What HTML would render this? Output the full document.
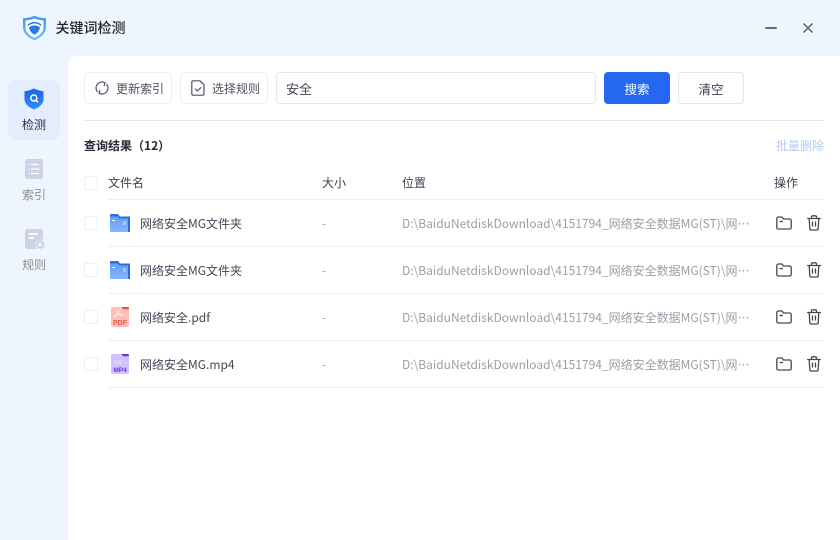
<!DOCTYPE html>
<html lang="zh">
<head>
<meta charset="utf-8">
<style>
*{box-sizing:border-box;margin:0;padding:0}
html,body{width:840px;height:540px;overflow:hidden}
body{background:#eef5ff;font-family:"Noto Sans CJK SC","Liberation Sans",sans-serif;font-size:12px;color:#333a47;position:relative}
.a{position:absolute;white-space:nowrap}
.t{line-height:18px;height:18px}
#main{position:absolute;left:68px;top:56px;width:772px;height:484px;background:#fff;border-top-left-radius:8px}
.btn{position:absolute;top:72px;height:32px;border:1px solid #eceef5;border-radius:4px;background:#fff;line-height:32px;color:#4a5160}
.cb{position:absolute;left:84px;width:14px;height:14px;border:1px solid #eeeff2;border-radius:2px;background:#fff}
.line{position:absolute;height:1px;background:#eceef4}
.nm{left:140px;color:#414855;font-size:12px}
.dash{left:322px;color:#a0a4ad}
.pth{left:402px;width:348px;color:#9a9ea8;overflow:hidden}
svg{position:absolute;display:block;overflow:visible}
</style>
</head>
<body>
<svg style="left:22px;top:15px" width="25" height="26" viewBox="0 0 25 26">
<defs><linearGradient id="o" x1="0" y1="0" x2="0" y2="1"><stop offset="0" stop-color="#3f97f3"/><stop offset="1" stop-color="#6cc0f8"/></linearGradient></defs>
<path d="M12.500 .8C9 2.400 5.500 3.100 1 3.300V12C1 18 6 22.800 12.500 25.300C19 22.800 24 18 24 12V3.300C19.500 3.100 16 2.400 12.500 .8Z" fill="url(#o)"/>
<path d="M12.500 3.400C9.500 4.700 6.800 5.300 3.500 5.600V12C3.500 17 7.200 20.600 12.500 22.700C17.800 20.600 21.500 17 21.500 12V5.600C18.200 5.300 15.500 4.700 12.500 3.400Z" fill="#fff"/>
<path d="M5.800 10.500C9.500 6.900 15.500 6.900 19.200 10.500" fill="none" stroke="#2b78ee" stroke-width="1.500"/>
<path d="M7 12.500C10.500 9.700 14.500 9.700 18 12.500C17.200 16.200 15.200 18.400 12.500 19.600C9.800 18.400 7.800 16.200 7 12.500Z" fill="#2478f0"/>
</svg>
<div class="a" style="left:55.500px;top:18px;font-size:14px;line-height:20px;font-weight:500;color:#1f2430">关键词检测</div>
<div class="a" style="left:765px;top:27px;width:12px;height:2px;background:#666b78;border-radius:1px"></div>
<svg style="left:803px;top:23px" width="10" height="10" viewBox="0 0 10 10"><path d="M.5 .5L9.500 9.500M9.500 .5L.5 9.500" stroke="#5a5e6e" stroke-width="1.500"/></svg>

<div class="a" style="left:8px;top:80px;width:52px;height:60px;background:#e3edfd;border-radius:8px"></div>
<svg style="left:24px;top:88px" width="20" height="22" viewBox="0 0 20 22">
<defs><linearGradient id="g" x1="0" y1="0" x2="0" y2="1"><stop offset="0" stop-color="#1a62ea"/><stop offset="1" stop-color="#2f8df5"/></linearGradient></defs>
<path d="M10 .5C7.500 1.800 4.500 2.700 .5 3.200V11C.5 15.500 4 19 10 21.500C16 19 19.500 15.500 19.500 11V3.200C15.500 2.700 12.500 1.800 10 .5Z" fill="url(#g)"/>
<circle cx="9.800" cy="10" r="3" fill="none" stroke="#fff" stroke-width="1.500"/>
<path d="M12 12.200L13.600 13.800" stroke="#fff" stroke-width="1.500" stroke-linecap="round"/>
</svg>
<div class="a t" style="left:22px;top:116px;color:#2b3240">检测</div>

<svg style="left:25px;top:159px" width="18" height="20" viewBox="0 0 18 20">
<rect width="18" height="20" rx="2.500" fill="#cdd3e4"/>
<path d="M6 5.500H14M6 10H14M6 14.500H14" stroke="#fff" stroke-width="1.300"/>
<path d="M3.500 5.500H4.700M3.500 10H4.700M3.500 14.500H4.700" stroke="#fff" stroke-width="1.300"/>
</svg>
<div class="a t" style="left:22px;top:186px;color:#8b8f9b">索引</div>

<svg style="left:25px;top:229px" width="20" height="22" viewBox="0 0 20 22">
<path d="M2.500 0H15.500A2.500 2.500 0 0 1 18 2.500V11A5.500 5.500 0 0 0 11 19V20H2.500A2.500 2.500 0 0 1 0 17.500V2.500A2.500 2.500 0 0 1 2.500 0Z" fill="#cdd3e4"/>
<path d="M3.500 5H13M3.500 9H9" stroke="#fff" stroke-width="1.700"/>
<circle cx="15" cy="15.500" r="2.800" fill="none" stroke="#cdd3e4" stroke-width="1.800"/>
<circle cx="15" cy="15.500" r="4.300" fill="none" stroke="#cdd3e4" stroke-width="1.100" stroke-dasharray="1.600 1.100"/>
</svg>
<div class="a t" style="left:22px;top:256px;color:#8b8f9b">规则</div>

<div id="main"></div>

<div class="btn" style="left:84px;width:88px"><span class="a" style="left:31px;top:0">更新索引</span></div>
<svg style="left:95px;top:81px" width="14" height="14" viewBox="0 0 14 14" fill="none" stroke="#4c5261" stroke-width="1.200" stroke-linecap="round" stroke-linejoin="round">
<path d="M2.200 10.600A6 6 0 0 1 10 1.800L9.200 4.600"/><path d="M11.800 3.400A6 6 0 0 1 4 12.200L4.800 9.400"/>
</svg>
<div class="btn" style="left:180px;width:88px"><span class="a" style="left:31px;top:0">选择规则</span></div>
<svg style="left:191px;top:80px" width="14" height="16" viewBox="0 0 14 16" fill="none" stroke="#4c5261" stroke-width="1.200" stroke-linejoin="round" stroke-linecap="round">
<path d="M2 .8H9L13 4.800V13.800A1.400 1.400 0 0 1 11.600 15.200H2.200A1.400 1.400 0 0 1 .8 13.800V2A1.200 1.200 0 0 1 2 .8Z"/>
<path d="M4.300 9L6.300 11L9.700 7.800"/>
</svg>
<div class="btn" style="left:276px;width:320px;border-color:#e4e6ec;color:#414855"><span class="a" style="left:9px;top:0;font-size:13px">安全</span></div>
<div class="btn" style="left:604px;width:66px;background:#2468f2;border-color:#2468f2;color:#fff;text-align:center;font-size:12.500px;line-height:31px">搜索</div>
<div class="btn" style="left:678px;width:66px;border-color:#e6e7eb;color:#3a404c;text-align:center;font-size:12.500px;line-height:31px">清空</div>

<div class="line" style="left:84px;top:120px;width:740px;background:#e8e9ee"></div>
<div class="a t" style="left:84px;top:137px;font-weight:700;color:#252b38">查询结果（12）</div>
<div class="a t" style="left:776px;top:137px;color:#b4cbf8">批量删除</div>

<div class="cb" style="top:176px"></div>
<div class="a t" style="left:108px;top:174px;color:#3d4350">文件名</div>
<div class="a t" style="left:322px;top:174px;color:#3d4350">大小</div>
<div class="a t" style="left:402px;top:174px;color:#3d4350">位置</div>
<div class="a t" style="left:774px;top:174px;color:#3d4350">操作</div>
<div class="line" style="left:108px;top:199px;width:716px"></div>

<!-- row 1 -->
<div class="cb" style="top:216px"></div>
<svg style="left:110px;top:214px" width="20" height="18" viewBox="0 0 20 18">
<defs><linearGradient id="f" x1="0" y1="0" x2="0" y2="1"><stop offset="0" stop-color="#64a0f8"/><stop offset="1" stop-color="#84b6fb"/></linearGradient></defs>
<path d="M0 1.500A1.200 1.200 0 0 1 1.200 0H8L10 2.500H20V18H1.200A1.200 1.200 0 0 1 0 16.800Z" fill="#2f6be0"/>
<path d="M0 3.500A1 1 0 0 1 1 2.500H8L9.500 4.500H18V18H1.200A1.200 1.200 0 0 1 0 16.800Z" fill="url(#f)"/>
<path d="M2 6.500H5" stroke="#fff" stroke-width="1"/><rect x="13" y="7" width="3" height="4" fill="#a3c6fb"/>
</svg>
<div class="a t nm" style="top:215px">网络安全MG文件夹</div>
<div class="a t dash" style="top:215px">-</div>
<div class="a t pth" style="top:215px">D:\BaiduNetdiskDownload\4151794_网络安全数据MG(ST)\网…</div>
<div class="line" style="left:108px;top:246px;width:716px"></div>

<!-- row 2 -->
<div class="cb" style="top:263px"></div>
<svg style="left:110px;top:261px" width="20" height="18" viewBox="0 0 20 18">
<path d="M0 1.500A1.200 1.200 0 0 1 1.200 0H8L10 2.500H20V18H1.200A1.200 1.200 0 0 1 0 16.800Z" fill="#2f6be0"/>
<path d="M0 3.500A1 1 0 0 1 1 2.500H8L9.500 4.500H18V18H1.200A1.200 1.200 0 0 1 0 16.800Z" fill="url(#f)"/>
<path d="M2 6.500H5" stroke="#fff" stroke-width="1"/><rect x="13" y="7" width="3" height="4" fill="#a3c6fb"/>
</svg>
<div class="a t nm" style="top:262px">网络安全MG文件夹</div>
<div class="a t dash" style="top:262px">-</div>
<div class="a t pth" style="top:262px">D:\BaiduNetdiskDownload\4151794_网络安全数据MG(ST)\网…</div>
<div class="line" style="left:108px;top:293px;width:716px"></div>

<!-- row 3 -->
<div class="cb" style="top:310px"></div>
<svg style="left:111px;top:307px" width="18" height="20" viewBox="0 0 18 20">
<path d="M0 1.500A1.500 1.500 0 0 1 1.500 0H9L11 2H16.500A1.500 1.500 0 0 1 18 3.500V18.500A1.500 1.500 0 0 1 16.500 20H1.500A1.500 1.500 0 0 1 0 18.500Z" fill="#ffc0b8"/>
<path d="M10 0H16.500A1.500 1.500 0 0 1 18 1.500V2.200H12Z" fill="#ec4b3f"/>
<path d="M7.500 3.500C7.200 6 6.300 8 3.500 9.800M7.500 6C8.500 7.500 10 8.300 12 8.500" fill="none" stroke="#fff" stroke-width="1"/>
<text x="9" y="18" text-anchor="middle" font-size="7" font-weight="700" fill="#e9584d" font-family="Liberation Sans">PDF</text>
</svg>
<div class="a t nm" style="top:309px">网络安全.pdf</div>
<div class="a t dash" style="top:309px">-</div>
<div class="a t pth" style="top:309px">D:\BaiduNetdiskDownload\4151794_网络安全数据MG(ST)\网…</div>
<div class="line" style="left:108px;top:340px;width:716px"></div>

<!-- row 4 -->
<div class="cb" style="top:357px"></div>
<svg style="left:111px;top:354px" width="18" height="20" viewBox="0 0 18 20">
<path d="M0 1.500A1.500 1.500 0 0 1 1.500 0H9L11 2H16.500A1.500 1.500 0 0 1 18 3.500V18.500A1.500 1.500 0 0 1 16.500 20H1.500A1.500 1.500 0 0 1 0 18.500Z" fill="#d2c2fc"/>
<path d="M10 0H16.500A1.500 1.500 0 0 1 18 1.500V2.200H12Z" fill="#6a32e8"/>
<path d="M3.500 6.500H10V10H3.500Z" fill="#dcd0fc"/>
<text x="9" y="18" text-anchor="middle" font-size="6.500" font-weight="700" fill="#6a32e8" font-family="Liberation Sans">MP4</text>
</svg>
<div class="a t nm" style="top:356px">网络安全MG.mp4</div>
<div class="a t dash" style="top:356px">-</div>
<div class="a t pth" style="top:356px">D:\BaiduNetdiskDownload\4151794_网络安全数据MG(ST)\网…</div>
<div class="line" style="left:108px;top:387px;width:716px"></div>

<!-- action icons -->
<svg style="left:776px;top:216px" width="16" height="14" viewBox="0 0 16 14" fill="none" stroke="#414755" stroke-width="1.300" stroke-linejoin="round"><path d="M.8 2.500A1.500 1.500 0 0 1 2.300 1H6L7.500 3H13.700A1.500 1.500 0 0 1 15.200 4.500V11.500A1.500 1.500 0 0 1 13.700 13H2.300A1.500 1.500 0 0 1 .8 11.500Z"/><path d="M3.500 5.500H7"/></svg>
<svg style="left:807px;top:215px" width="14" height="16" viewBox="0 0 14 16" fill="none" stroke="#414755" stroke-width="1.300" stroke-linecap="round" stroke-linejoin="round"><path d="M.7 3.500H13.300M4.500 3.500V2A1.200 1.200 0 0 1 5.700 .8H8.300A1.200 1.200 0 0 1 9.500 2V3.500M2.200 3.500L2.800 13.700A1.400 1.400 0 0 0 4.200 15H9.800A1.400 1.400 0 0 0 11.200 13.700L11.800 3.500M5.500 7V11M8.500 7V11"/></svg>
<svg style="left:776px;top:263px" width="16" height="14" viewBox="0 0 16 14" fill="none" stroke="#414755" stroke-width="1.300" stroke-linejoin="round"><path d="M.8 2.500A1.500 1.500 0 0 1 2.300 1H6L7.500 3H13.700A1.500 1.500 0 0 1 15.200 4.500V11.500A1.500 1.500 0 0 1 13.700 13H2.300A1.500 1.500 0 0 1 .8 11.500Z"/><path d="M3.500 5.500H7"/></svg>
<svg style="left:807px;top:262px" width="14" height="16" viewBox="0 0 14 16" fill="none" stroke="#414755" stroke-width="1.300" stroke-linecap="round" stroke-linejoin="round"><path d="M.7 3.500H13.300M4.500 3.500V2A1.200 1.200 0 0 1 5.700 .8H8.300A1.200 1.200 0 0 1 9.500 2V3.500M2.200 3.500L2.800 13.700A1.400 1.400 0 0 0 4.200 15H9.800A1.400 1.400 0 0 0 11.200 13.700L11.800 3.500M5.500 7V11M8.500 7V11"/></svg>
<svg style="left:776px;top:310px" width="16" height="14" viewBox="0 0 16 14" fill="none" stroke="#414755" stroke-width="1.300" stroke-linejoin="round"><path d="M.8 2.500A1.500 1.500 0 0 1 2.300 1H6L7.500 3H13.700A1.500 1.500 0 0 1 15.200 4.500V11.500A1.500 1.500 0 0 1 13.700 13H2.300A1.500 1.500 0 0 1 .8 11.500Z"/><path d="M3.500 5.500H7"/></svg>
<svg style="left:807px;top:309px" width="14" height="16" viewBox="0 0 14 16" fill="none" stroke="#414755" stroke-width="1.300" stroke-linecap="round" stroke-linejoin="round"><path d="M.7 3.500H13.300M4.500 3.500V2A1.200 1.200 0 0 1 5.700 .8H8.300A1.200 1.200 0 0 1 9.500 2V3.500M2.200 3.500L2.800 13.700A1.400 1.400 0 0 0 4.200 15H9.800A1.400 1.400 0 0 0 11.200 13.700L11.800 3.500M5.500 7V11M8.500 7V11"/></svg>
<svg style="left:776px;top:357px" width="16" height="14" viewBox="0 0 16 14" fill="none" stroke="#414755" stroke-width="1.300" stroke-linejoin="round"><path d="M.8 2.500A1.500 1.500 0 0 1 2.300 1H6L7.500 3H13.700A1.500 1.500 0 0 1 15.200 4.500V11.500A1.500 1.500 0 0 1 13.700 13H2.300A1.500 1.500 0 0 1 .8 11.500Z"/><path d="M3.500 5.500H7"/></svg>
<svg style="left:807px;top:356px" width="14" height="16" viewBox="0 0 14 16" fill="none" stroke="#414755" stroke-width="1.300" stroke-linecap="round" stroke-linejoin="round"><path d="M.7 3.500H13.300M4.500 3.500V2A1.200 1.200 0 0 1 5.700 .8H8.300A1.200 1.200 0 0 1 9.500 2V3.500M2.200 3.500L2.800 13.700A1.400 1.400 0 0 0 4.200 15H9.800A1.400 1.400 0 0 0 11.200 13.700L11.800 3.500M5.500 7V11M8.500 7V11"/></svg>
</body>
</html>
